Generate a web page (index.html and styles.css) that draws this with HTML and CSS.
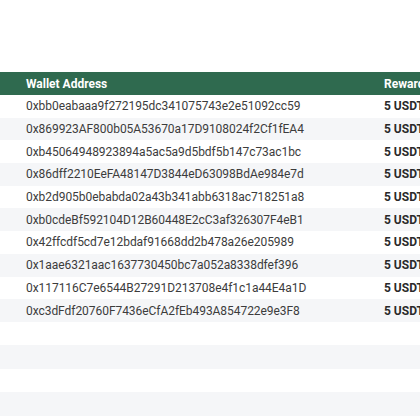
FILE: index.html
```html
<!DOCTYPE html>
<html>
<head>
<meta charset="utf-8">
<link rel="stylesheet" href="styles.css">
</head>
<body>
<div class="page">
  <table class="winners">
    <thead>
      <tr><th class="addr">Wallet Address</th><th class="reward">Reward</th></tr>
    </thead>
    <tbody>
      <tr><td class="addr">0xbb0eabaaa9f272195dc341075743e2e51092cc59</td><td class="reward">5 USDT</td></tr>
      <tr><td class="addr">0x869923AF800b05A53670a17D9108024f2Cf1fEA4</td><td class="reward">5 USDT</td></tr>
      <tr><td class="addr">0xb45064948923894a5ac5a9d5bdf5b147c73ac1bc</td><td class="reward">5 USDT</td></tr>
      <tr><td class="addr">0x86dff2210EeFA48147D3844eD63098BdAe984e7d</td><td class="reward">5 USDT</td></tr>
      <tr><td class="addr">0xb2d905b0ebabda02a43b341abb6318ac718251a8</td><td class="reward">5 USDT</td></tr>
      <tr><td class="addr">0xb0cdeBf592104D12B60448E2cC3af326307F4eB1</td><td class="reward">5 USDT</td></tr>
      <tr><td class="addr">0x42ffcdf5cd7e12bdaf91668dd2b478a26e205989</td><td class="reward">5 USDT</td></tr>
      <tr><td class="addr">0x1aae6321aac1637730450bc7a052a8338dfef396</td><td class="reward">5 USDT</td></tr>
      <tr><td class="addr">0x117116C7e6544B27291D213708e4f1c1a44E4a1D</td><td class="reward">5 USDT</td></tr>
      <tr><td class="addr">0xc3dFdf20760F7436eCfA2fEb493A854722e9e3F8</td><td class="reward">5 USDT</td></tr>
      <tr class="empty"><td></td><td></td></tr>
      <tr class="empty"><td></td><td></td></tr>
      <tr class="empty"><td></td><td></td></tr>
      <tr class="empty"><td></td><td></td></tr>
    </tbody>
  </table>
</div>
</body>
</html>
```
FILE: styles.css
```css
html, body {
  margin: 0;
  padding: 0;
  background: #ffffff;
  overflow: hidden;
}
.page {
  width: 420px;
  height: 420px;
  overflow: hidden;
  padding-top: 72px;
  box-sizing: border-box;
}
.winners {
  width: 480px;
  border-collapse: collapse;
  font-family: Roboto, "Liberation Sans", sans-serif;
  font-size: 12px;
  table-layout: fixed;
}
.winners th, .winners td {
  padding: 0;
  height: 22.7px;
  text-align: left;
  white-space: nowrap;
  vertical-align: middle;
}
.winners thead tr {
  background: #2f6a4f;
}
.winners th {
  color: #ffffff;
  font-weight: 700;
  height: 23px;
}
.winners .addr {
  width: 358px;
  padding-left: 26px;
}
.winners .reward {
  width: 96px;
}
.winners td.addr {
  color: #3c3c3c;
  letter-spacing: -0.05px;
}
.winners td.reward {
  color: #2a2a2a;
  font-weight: 700;
}
.winners tbody tr:nth-child(even) {
  background: #f5f6f8;
}
.winners tr.empty td {
  height: 23.5px;
}
```
